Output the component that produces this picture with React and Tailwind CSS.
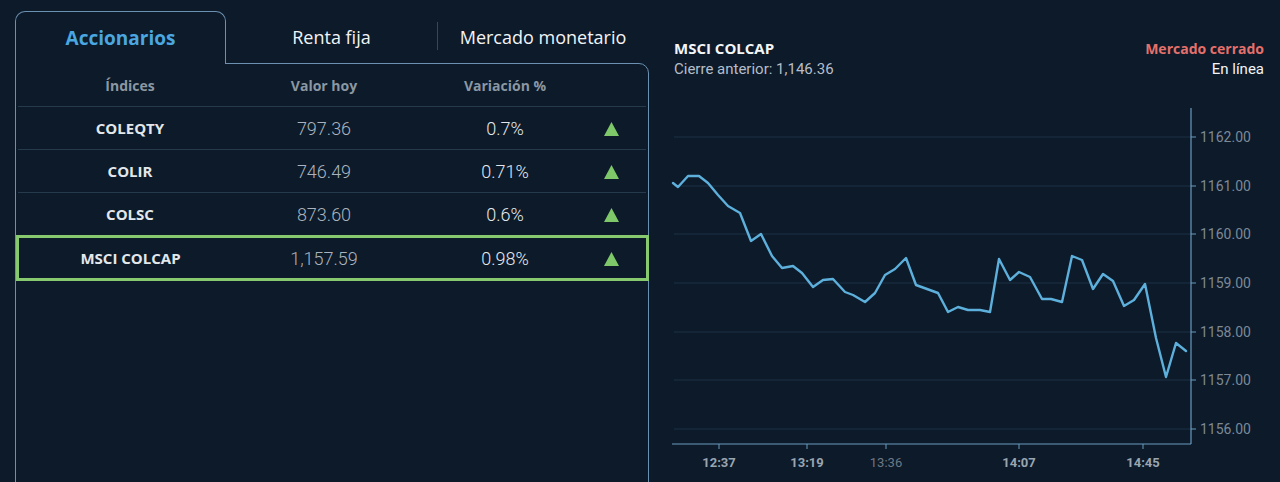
import React from "react";

const rows = [
  { name: "COLEQTY", value: "797.36", v: "0.7%" },
  { name: "COLIR", value: "746.49", v: "0.71%" },
  { name: "COLSC", value: "873.60", v: "0.6%" },
];

const pts = [
  [673,183],[678,187],[688,176],[699,176],[708,183],[718,195],[728,206],[740,213],[751,241],[761,234],[772,256],[782,268],[793,266],[802,273],[813,287],[823,280],[833,279],[845,292],[853,295],[865,302],[875,293],[885,275],[895,269],[906,258],[916,285],[927,289],[938,293],[948,312],[958,307],[968,310],[980,310],[990,312],[999,259],[1010,280],[1019,272],[1030,277],[1042,299],[1051,299],[1062,302],[1072,256],[1082,260],[1093,289],[1103,274],[1113,281],[1124,306],[1134,300],[1145,284],[1156,338],[1166,377],[1176,343],[1186,351]
];

const yTicks = [
  [137, "1162.00"],[186, "1161.00"],[234, "1160.00"],[283, "1159.00"],[332, "1158.00"],[380, "1157.00"],[429, "1156.00"],
];
const xTicks = [
  [719, "12:37", true],[807, "13:19", true],[886, "13:36", false],[1019, "14:07", true],[1143, "14:45", true],
];

function Tri() {
  return (
    <svg width="15" height="14" viewBox="0 0 15 14" className="block">
      <polygon points="7.5,0 15,14 0,14" fill="#7ec86a" />
    </svg>
  );
}

function Row({ name, value, v }) {
  return (
    <div className="flex items-center h-[43px] border-b border-[#263a4d] mx-[2px]">
      <div className="w-[224px] text-center font-bold text-[15px] text-[#e3e7eb]" style={{ fontFamily: '"Open Sans", sans-serif' }}>{name}</div>
      <div className="w-[164px] text-center text-[18px] text-[#aab3bd] font-light" style={{ fontFamily: 'Roboto, sans-serif' }}>{value}</div>
      <div className="ml-[26px] w-[146px] text-center text-[18px] text-[#e4e8ec] font-light" style={{ fontFamily: 'Roboto, sans-serif' }}>{v}</div>
      <div className="ml-[26px] pt-[2px]"><Tri /></div>
    </div>
  );
}

export default function App() {
  return (
    <div className="w-[1280px] h-[482px] bg-[#0c1a2a] flex overflow-hidden">
      {/* Left */}
      <div className="pl-[15px] pt-[11px] w-[649px] shrink-0 flex flex-col">
        <div className="flex h-[52px] relative">
          <div className="w-[211px] h-[53px] border border-b-0 border-[#6b90b0] rounded-t-[10px] bg-[#0c1a2a] relative z-10 flex items-center justify-center">
            <span className="text-[19px] font-bold text-[#4aa7e0]" style={{ fontFamily: '"Open Sans", sans-serif' }}>Accionarios</span>
          </div>
          <div className="w-[211px] flex items-center justify-center">
            <span className="text-[18px] text-[#f2f4f6]" style={{ fontFamily: '"Open Sans", sans-serif' }}>Renta fija</span>
          </div>
          <div className="w-px h-[28px] bg-[#34485a] mt-[11px]"></div>
          <div className="w-[210px] flex items-center justify-center">
            <span className="text-[18px] text-[#f2f4f6]" style={{ fontFamily: '"Open Sans", sans-serif' }}>Mercado monetario</span>
          </div>
        </div>
        <div className="border border-[#6b90b0] rounded-tr-[10px] h-[440px] shrink-0">
          <div className="flex items-center h-[43px] border-b border-[#263a4d] mx-[2px]">
            <div className="w-[224px] text-center font-bold text-[14px] text-[#8b97a3]" style={{ fontFamily: '"Open Sans", sans-serif' }}>Índices</div>
            <div className="w-[164px] text-center font-bold text-[14px] text-[#8b97a3]" style={{ fontFamily: '"Open Sans", sans-serif' }}>Valor hoy</div>
            <div className="ml-[26px] w-[146px] text-center font-bold text-[14px] text-[#8b97a3]" style={{ fontFamily: '"Open Sans", sans-serif' }}>Variación %</div>
          </div>
          {rows.map((r) => (
            <Row key={r.name} {...r} />
          ))}
          <div className="border-[3px] border-[#86c96f] h-[46px] -mt-px -mr-px flex items-center">
            <div className="w-[223px] text-center font-bold text-[15px] text-[#e3e7eb]" style={{ fontFamily: '"Open Sans", sans-serif' }}>MSCI COLCAP</div>
            <div className="w-[164px] text-center text-[18px] text-[#aab3bd] font-light" style={{ fontFamily: 'Roboto, sans-serif' }}>1,157.59</div>
            <div className="ml-[26px] w-[146px] text-center text-[18px] text-[#e4e8ec] font-light" style={{ fontFamily: 'Roboto, sans-serif' }}>0.98%</div>
            <div className="ml-[26px] pt-[2px]"><Tri /></div>
          </div>
        </div>
      </div>

      {/* Right */}
      <div className="w-[631px] flex flex-col">
        <div className="pl-[25px] pr-[16px] pt-[38px] flex justify-between h-[100px]">
          <div className="leading-[21px]">
            <div className="text-[15px] font-bold text-[#f3f5f7]" style={{ fontFamily: '"Open Sans", sans-serif' }}>MSCI COLCAP</div>
            <div className="text-[15px] text-[#b5bec8]" style={{ fontFamily: 'Roboto, sans-serif' }}>Cierre anterior: 1,146.36</div>
          </div>
          <div className="leading-[21px] text-right">
            <div className="text-[14px] font-bold text-[#e5706b]" style={{ fontFamily: '"Open Sans", sans-serif' }}>Mercado cerrado</div>
            <div className="text-[15px] text-[#f3f5f7]" style={{ fontFamily: 'Roboto, sans-serif' }}>En línea</div>
          </div>
        </div>
        <svg width="620" height="382" viewBox="660 100 620 382" className="block ml-[11px]">
          {yTicks.map(([y]) => (
            <line key={y} x1="674" x2="1191" y1={y} y2={y} stroke="#1c3044" strokeWidth="1" />
          ))}
          <line x1="1191" x2="1191" y1="108" y2="444" stroke="#6a9cc0" strokeWidth="1.2" />
          <line x1="672" x2="1191" y1="444" y2="444" stroke="#6a9cc0" strokeWidth="1.2" />
          {yTicks.map(([y, t]) => (
            <g key={"l" + y}>
              <line x1="1191" x2="1196" y1={y} y2={y} stroke="#6a9cc0" strokeWidth="1" />
              <text x="1200" y={y + 5} fill="#7d8995" fontSize="14" fontFamily="Roboto, sans-serif">{t}</text>
            </g>
          ))}
          {xTicks.map(([x, t, b]) => (
            <g key={t}>
              <line x1={x} x2={x} y1="444" y2="449" stroke="#6a9cc0" strokeWidth="1" />
              <text x={x} y="467" textAnchor="middle" fill={b ? "#9aa5b0" : "#6c7884"} fontSize="13" fontWeight={b ? "bold" : "normal"} fontFamily="Roboto, sans-serif">{t}</text>
            </g>
          ))}
          <polyline points={pts.map((p) => p.join(",")).join(" ")} fill="none" stroke="#5eb0dc" strokeWidth="2.4" strokeLinejoin="round" strokeLinecap="round" />
        </svg>
      </div>
    </div>
  );
}
